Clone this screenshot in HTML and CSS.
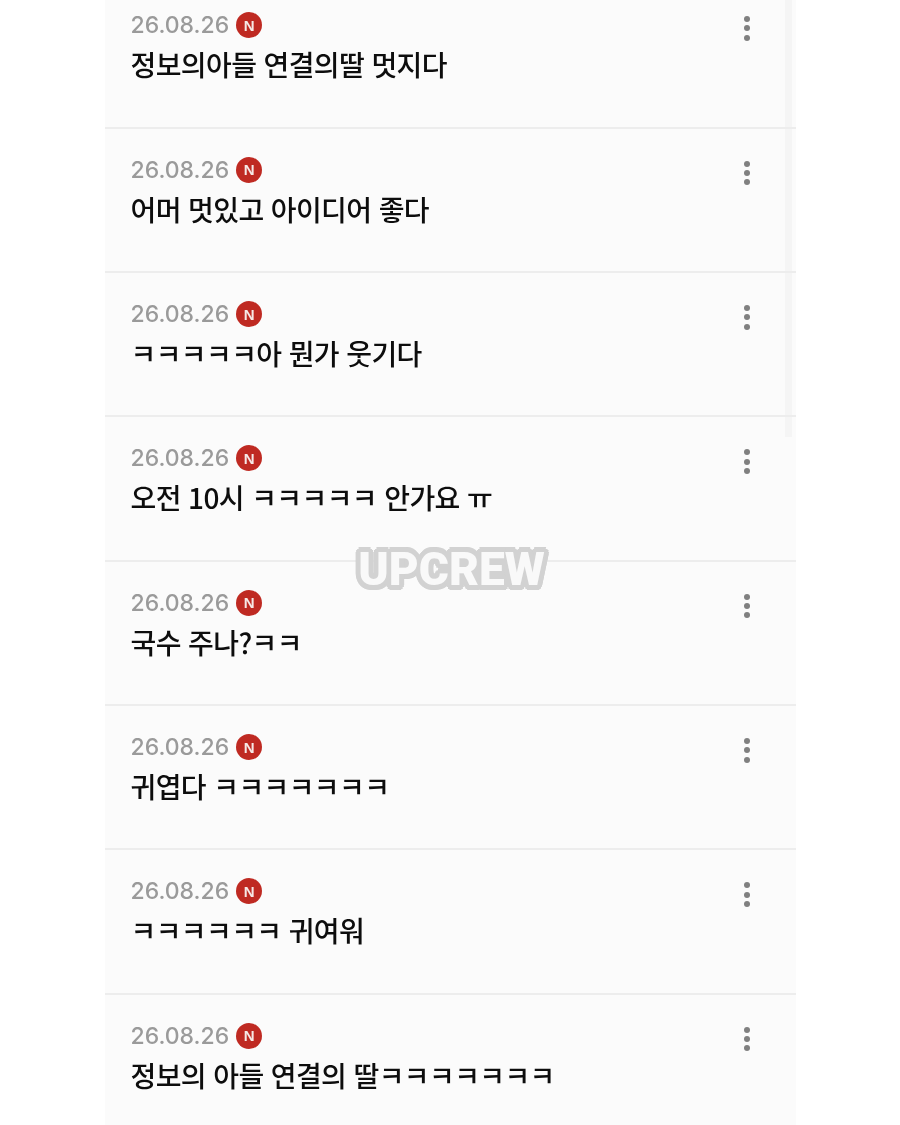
FILE: index.html
```html
<!DOCTYPE html>
<html lang="ko">
<head>
<meta charset="utf-8">
<title>댓글</title>
<link rel="stylesheet" href="styles.css">
</head>
<body>
<main class="list">
  <div class="scrollbar"></div>
  <article class="row row-first"><div class="body"><div class="meta"><span class="date">26.08.26</span><span class="badge">N</span></div><p class="text">정보의아들 연결의딸 멋지다</p></div><div class="more"><i></i><i></i><i></i></div></article>
  <article class="row"><div class="body"><div class="meta"><span class="date">26.08.26</span><span class="badge">N</span></div><p class="text">어머 멋있고 아이디어 좋다</p></div><div class="more"><i></i><i></i><i></i></div></article>
  <article class="row"><div class="body"><div class="meta"><span class="date">26.08.26</span><span class="badge">N</span></div><p class="text">ㅋㅋㅋㅋㅋ아 뭔가 웃기다</p></div><div class="more"><i></i><i></i><i></i></div></article>
  <article class="row"><div class="body"><div class="meta"><span class="date">26.08.26</span><span class="badge">N</span></div><p class="text">오전 10시 ㅋㅋㅋㅋㅋ 안가요 ㅠ</p></div><div class="more"><i></i><i></i><i></i></div></article>
  <article class="row"><div class="body"><div class="meta"><span class="date">26.08.26</span><span class="badge">N</span></div><p class="text">국수 주나?ㅋㅋ</p></div><div class="more"><i></i><i></i><i></i></div></article>
  <article class="row"><div class="body"><div class="meta"><span class="date">26.08.26</span><span class="badge">N</span></div><p class="text">귀엽다 ㅋㅋㅋㅋㅋㅋㅋ</p></div><div class="more"><i></i><i></i><i></i></div></article>
  <article class="row"><div class="body"><div class="meta"><span class="date">26.08.26</span><span class="badge">N</span></div><p class="text">ㅋㅋㅋㅋㅋㅋ 귀여워</p></div><div class="more"><i></i><i></i><i></i></div></article>
  <article class="row"><div class="body"><div class="meta"><span class="date">26.08.26</span><span class="badge">N</span></div><p class="text">정보의 아들 연결의 딸ㅋㅋㅋㅋㅋㅋㅋ</p></div><div class="more"><i></i><i></i><i></i></div></article>
</main>
<div class="watermark">UPCREW</div>
</body>
</html>
```

FILE: styles.css
```css
html, body {
  margin: 0;
  padding: 0;
  height: 1125px;
  overflow: hidden;
  background: #ffffff;
}
body {
  position: relative;
  font-family: "Inter", "Noto Sans CJK KR", sans-serif;
}
.list {
  position: relative;
  width: 691px;
  margin-left: 105px;
  background: #fbfbfb;
  height: 1125px;
  overflow: hidden;
  filter: blur(0.3px);
}
.row {
  position: relative;
  display: flex;
  justify-content: space-between;
  box-sizing: border-box;
  height: 144.3px;
  padding: 25px 46px 0 25.5px;
  border-bottom: 2px solid #ededed;
}
.row-first {
  height: 128.9px;
  padding-top: 9px;
}
.meta {
  display: flex;
  align-items: center;
  gap: 7px;
  height: 32px;
}
.date {
  font-size: 23px;
  font-weight: 500;
  color: #9a9a9a;
  line-height: 32px;
}
.badge {
  display: flex;
  align-items: center;
  justify-content: center;
  width: 26px;
  height: 26px;
  border-radius: 50%;
  background: #bf2a22;
  color: #f6e9e6;
  font-family: "Liberation Sans", sans-serif;
  font-size: 15px;
  font-weight: 700;
}
.text {
  margin: 3px 0 0;
  font-family: "Noto Sans CJK KR", sans-serif;
  font-size: 28px;
  font-weight: 500;
  line-height: 40px;
  color: #0d0d0d;
  letter-spacing: -0.6px;
}
.more {
  display: flex;
  flex-direction: column;
  gap: 3.3px;
  padding-top: 7px;
}
.more i {
  display: block;
  width: 6px;
  height: 6px;
  border-radius: 50%;
  background: #808080;
}
.scrollbar {
  position: absolute;
  top: 0;
  left: 680px;
  width: 7px;
  height: 437px;
  background: #f5f5f5;
}
.watermark {
  position: absolute;
  left: 345px;
  top: 540px;
  width: 213px;
  text-align: center;
  font-family: "Roboto", sans-serif;
  font-size: 46px;
  font-weight: 900;
  line-height: 58px;
  color: #f9f9f9;
  filter: blur(0.7px);
  text-shadow:
    5px 0 0 #d2d2d2, -5px 0 0 #d2d2d2, 0 5px 0 #d2d2d2, 0 -5px 0 #d2d2d2,
    3.5px 3.5px 0 #d2d2d2, -3.5px 3.5px 0 #d2d2d2, 3.5px -3.5px 0 #d2d2d2, -3.5px -3.5px 0 #d2d2d2,
    4.6px 1.9px 0 #d2d2d2, -4.6px 1.9px 0 #d2d2d2, 4.6px -1.9px 0 #d2d2d2, -4.6px -1.9px 0 #d2d2d2,
    1.9px 4.6px 0 #d2d2d2, -1.9px 4.6px 0 #d2d2d2, 1.9px -4.6px 0 #d2d2d2, -1.9px -4.6px 0 #d2d2d2;
}
```
